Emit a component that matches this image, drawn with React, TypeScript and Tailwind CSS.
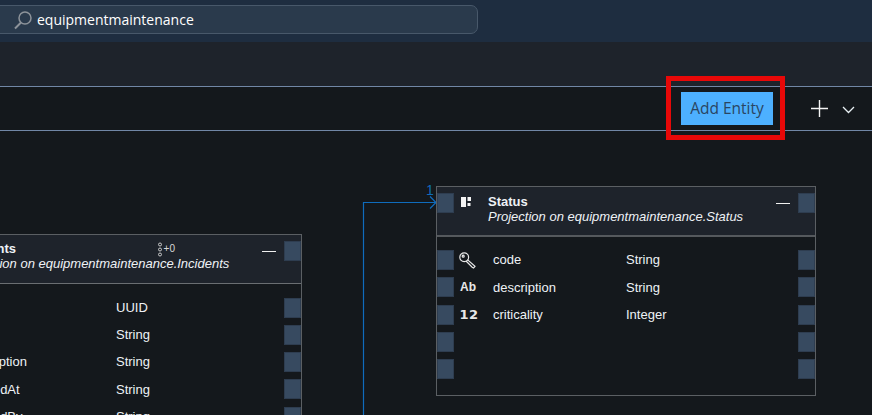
import React from 'react';

const sans = "font-['Liberation_Sans',Arial,sans-serif]";

function Port() {
  return <div className="h-[20px] w-[17px] shrink-0 border border-[#2e3d50] bg-[#374a60]" />;
}

function KeyIcon() {
  return (
    <svg className="mr-[3px]" width="17" height="17" viewBox="0 0 17 17" fill="none" stroke="#e8e8e8" strokeWidth="1.2">
      <circle cx="5.2" cy="5.2" r="4.4" />
      <circle cx="4.2" cy="4.2" r="1" />
      <path d="M8.4 7.6 16 14.4 14.6 16 13.2 15.2 7 9" />
    </svg>
  );
}

function AttrRow({ icon, name, type, nameWidth }: { icon?: React.ReactNode; name?: string; type?: string; nameWidth: string }) {
  return (
    <div className="flex h-[27.25px] items-center text-[13px] text-[#eef2f6]">
      <Port />
      <div className="mr-[9px] flex w-[30px] justify-center">{icon}</div>
      <div className={nameWidth}>{name}</div>
      <div className="flex-1">{type}</div>
      <Port />
    </div>
  );
}

function NodeHeader({ title, subtitle, icon, badge, frame, textTop }: { title: string; subtitle: string; icon?: React.ReactNode; badge?: React.ReactNode; frame: string; textTop: string }) {
  return (
    <div className={`flex items-start bg-[#1e232b] pt-[6px] ${frame}`}>
      <Port />
      <div className="w-[34px] shrink-0 pl-[7px] pt-[4px]">{icon}</div>
      <div className={`min-w-0 flex-1 whitespace-nowrap text-[13px] leading-[15px] text-[#eef2f6] ${textTop}`}>
        <div className="font-bold">{title}</div>
        <div className="italic">{subtitle}</div>
      </div>
      {badge}
      <div className="mr-[8px] mt-[10px] h-px w-[14px] shrink-0 bg-[#f0f0f0]" />
      <Port />
    </div>
  );
}

export default function App() {
  return (
    <div className={`relative h-[415px] w-[872px] overflow-hidden bg-[#14181c] ${sans}`}>
      <div className="flex h-[42px] items-start bg-[#1e2d40] pt-[5px]">
        <div className="ml-[-10px] flex h-[29px] w-[488px] items-center rounded-[7px] border border-[#48586a] bg-[#2a3a4c] pl-[22px]">
          <svg width="20" height="20" viewBox="0 0 20 20" fill="none" stroke="#8d939a" strokeWidth="1.5">
            <circle cx="12" cy="8" r="6" />
            <path d="M8 12.5 2 18.5" strokeWidth="2" />
          </svg>
          <span className="ml-[4px] font-['Open_Sans',sans-serif] text-[14px] text-white">equipmentmaintenance</span>
        </div>
      </div>
      <div className="box-content h-[44px] border-b border-[#7187a6] bg-[#1e232b]" />
      <div className="box-content flex h-[43px] items-center justify-end border-b border-[#7187a6]">
        <button className="mt-[-1px] h-[33px] w-[92px] bg-[#4db0ff] pt-[1px] font-['Open_Sans',sans-serif] text-[15.5px] text-[#2a4562]">Add Entity</button>
        <svg className="ml-[37px]" width="19" height="19" viewBox="0 0 19 19" stroke="#f4f4f4" strokeWidth="1.4">
          <path d="M9.5 1v17M1 9.5h17" />
        </svg>
        <svg className="ml-[13px] mr-[17px] mt-[3px]" width="13" height="8" viewBox="0 0 13 8" fill="none" stroke="#e8f0f4" strokeWidth="1.3">
          <path d="M1 1 6.5 6.5 12 1" />
        </svg>
      </div>

      {/* highlight drawn on top of the screenshot */}
      <div className="absolute left-[666px] top-[76px] h-[64px] w-[119px] border-[5px] border-[#e80808]" />

      {/* connector */}
      <svg className="absolute left-[355px] top-[180px]" width="85" height="235" viewBox="0 0 85 235" fill="none" stroke="#0f6cbd" strokeWidth="1.2">
        <path d="M8.5 235V22.5H81" />
        <path d="M75 16.5 81 22.5 75 28.5" />
      </svg>
      <span className="absolute left-[426px] top-[183px] text-[14px] leading-[15px] text-[#0f6cbd]">1</span>

      {/* Status node */}
      <div className="absolute left-[436px] top-[186px] h-[210px] w-[380px] border border-[#5b5f63]">
        <NodeHeader
          frame="h-[50px] border-b-2 border-[#55595d]"
          textTop="pt-[1px]"
          title="Status"
          subtitle="Projection on equipmentmaintenance.Status"
          icon={
            <svg className="block" width="11" height="11" viewBox="0 0 11 11" fill="#f4f4f4">
              <rect x="0" y="0" width="5" height="10" />
              <rect x="6.5" y="0" width="3.5" height="4" />
              <rect x="6.5" y="6" width="3" height="3" />
            </svg>
          }
        />
        <div className="pt-[9.5px]">
          <AttrRow nameWidth="w-[133px]" icon={<KeyIcon />} name="code" type="String" />
          <AttrRow nameWidth="w-[133px]" icon={<span className="mr-[2px] text-[12px] font-bold text-[#e8e8e8]">Ab</span>} name="description" type="String" />
          <AttrRow nameWidth="w-[133px]" icon={<span className="font-['DejaVu_Sans',sans-serif] text-[13px] font-bold tracking-[0.5px] text-[#e8e8e8]">12</span>} name="criticality" type="Integer" />
          <AttrRow nameWidth="w-[133px]" />
          <AttrRow nameWidth="w-[133px]" />
        </div>
      </div>

      {/* Incidents node, cut off by the left edge */}
      <div className="absolute left-[-93px] top-[234px] h-[220px] w-[395px] border border-[#5b5f63]">
        <NodeHeader
          frame="h-[49px] border-b border-[#6a6e72]"
          textTop="pt-0"
          title="Incidents"
          subtitle="Projection on equipmentmaintenance.Incidents"
          badge={
            <div className="mr-[87px] mt-[1px] flex shrink-0 items-start text-[10px] leading-[13px] text-[#d8d8d8]">
              <svg width="7" height="15" viewBox="0 0 7 15" fill="none" stroke="#d8d8d8" strokeWidth="0.9">
                <circle cx="3" cy="2.5" r="1.5" />
                <circle cx="3" cy="7.5" r="1.5" />
                <circle cx="3" cy="12.5" r="1.5" />
              </svg>
              <span>+0</span>
            </div>
          }
        />
        <div className="pt-[10px]">
          <AttrRow nameWidth="w-[152px]" name="id" type="UUID" />
          <AttrRow nameWidth="w-[152px]" name="title" type="String" />
          <AttrRow nameWidth="w-[152px]" name="description" type="String" />
          <AttrRow nameWidth="w-[152px]" name="createdAt" type="String" />
          <AttrRow nameWidth="w-[152px]" name="createdBy" type="String" />
        </div>
      </div>
    </div>
  );
}
